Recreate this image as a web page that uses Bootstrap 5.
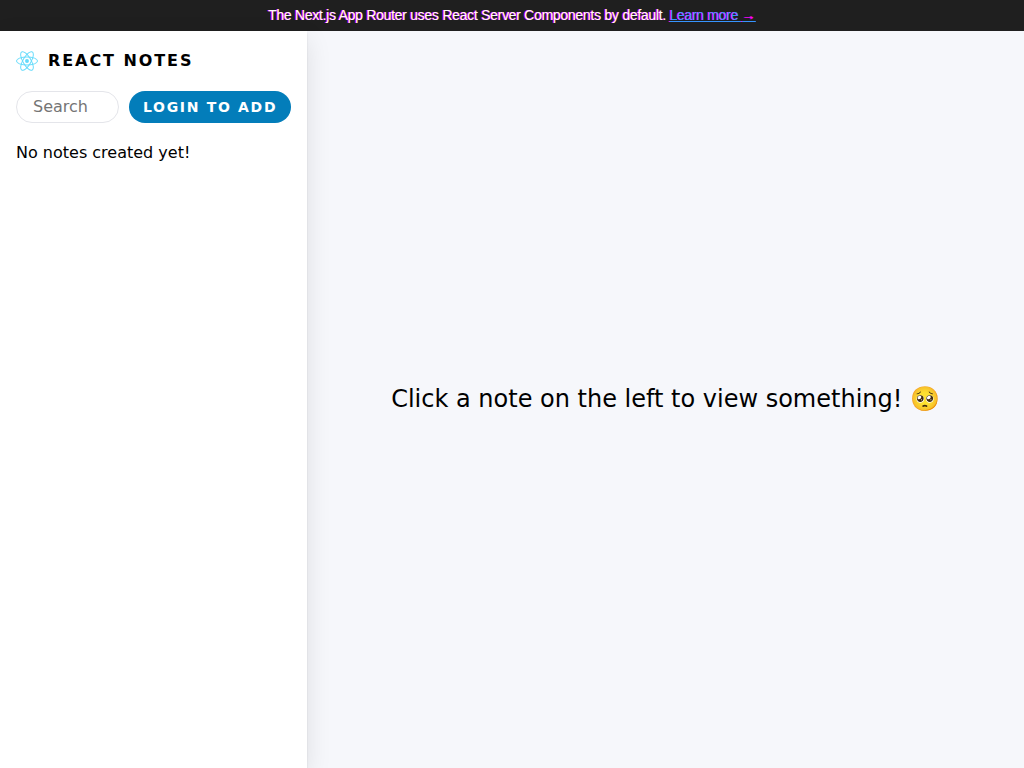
<!DOCTYPE html>
<html lang="en">
<head>
<meta charset="utf-8">
<meta name="viewport" content="width=device-width, initial-scale=1">
<title>React Notes</title>
<link rel="stylesheet" href="https://cdn.jsdelivr.net/npm/bootstrap@5.3.0/dist/css/bootstrap.min.css">
<style>
  body { font-family: "DejaVu Sans", sans-serif; font-size: 16px; line-height: 24px; color: #000; background: #fff; }
  .banner { background: #1f1f1f; color: #fafbfc; font-family: "Liberation Sans", sans-serif; font-size: 14px; line-height: 15px; letter-spacing: -.02em; padding: 8px; text-shadow: -1px 0 #f0f; }
  .banner a { color: #3694ff; }
  .banner .arrow { color: #f0f; font-weight: 700; }
  .sidebar { width: 30%; min-width: 260px; padding: 18px 16px; background: #fff; box-shadow: 0 8px 24px rgba(0, 0, 0, .1), 0 2px 2px rgba(0, 0, 0, .1); z-index: 1; }
  .brand { letter-spacing: .12em; color: #000; gap: 10px; margin-bottom: 18px; }
  .tools { gap: 10px; margin-bottom: 18px; }
  .search { flex: 1 1 0; min-width: 0; height: 32px; border: 1px solid #e4e5ea; border-radius: 100px; padding: 0 16px 2px; line-height: 24px; font-size: 16px; }
  .search::-webkit-search-cancel-button { display: none; }
  .search::placeholder { color: #757575; }
  .login { height: 32px; padding: 0 14px; border: 0; border-radius: 100px; background: #037dba; color: #fff; font-size: 14px; font-weight: 700; line-height: 20px; letter-spacing: .12em; }
  .viewer { background: #f6f7fb; font-size: 24px; line-height: 36px; padding-bottom: 2px; }
</style>
</head>
<body class="d-flex flex-column min-vh-100">
  <div class="banner text-center">The Next.js App Router uses React Server Components by default. <a href="#">Learn more <span class="arrow">→</span></a></div>
  <div class="d-flex flex-grow-1">
    <aside class="sidebar flex-shrink-0">
      <a href="#" class="brand d-flex align-items-center text-decoration-none fw-bold">
        <svg width="22" height="20" viewBox="-11.5 -10.232 23 20.463" fill="none" stroke="#61dafb" aria-hidden="true">
          <circle r="2.05" fill="#61dafb" stroke="none"/>
          <ellipse rx="11" ry="4.2"/>
          <ellipse rx="11" ry="4.2" transform="rotate(60)"/>
          <ellipse rx="11" ry="4.2" transform="rotate(120)"/>
        </svg>
        REACT NOTES
      </a>
      <div class="tools d-flex">
        <input class="search" type="search" placeholder="Search" aria-label="Search notes">
        <button class="login text-nowrap" type="button">LOGIN TO ADD</button>
      </div>
      <div>No notes created yet!</div>
    </aside>
    <main class="viewer flex-grow-1 d-flex align-items-center justify-content-center">
      <span>Click a note on the left to view something! 🥺</span>
    </main>
  </div>
  <script src="https://cdn.jsdelivr.net/npm/bootstrap@5.3.0/dist/js/bootstrap.bundle.min.js"></script>
</body>
</html>
